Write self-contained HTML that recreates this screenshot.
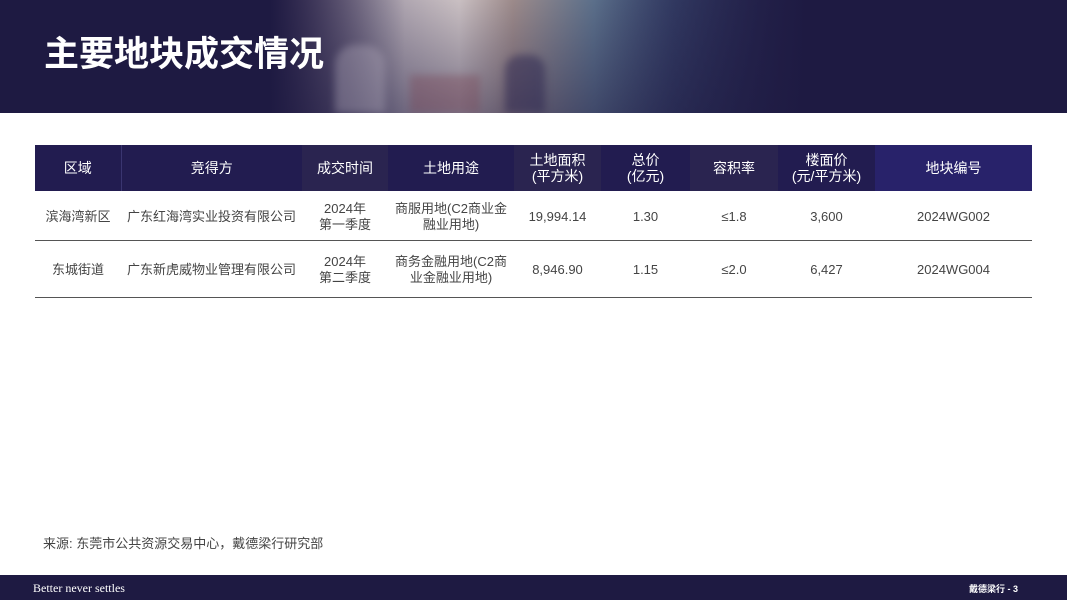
<!DOCTYPE html>
<html><head><meta charset="utf-8"><style>
*{margin:0;padding:0;box-sizing:border-box}
body{width:1067px;height:600px;position:relative;background:#fff;font-family:"Liberation Sans","Noto Sans CJK SC",sans-serif;overflow:hidden}
.hdr{position:absolute;left:0;top:0;width:1067px;height:113px;background:#1e1a42;overflow:hidden}
.photo{position:absolute;left:270px;top:0;width:540px;height:113px;
background:linear-gradient(90deg,rgba(30,26,66,1) 0%,rgba(30,26,66,0) 25%,rgba(30,26,66,0) 60%,rgba(30,26,66,1) 100%),
linear-gradient(180deg,rgba(30,26,66,0) 0%,rgba(30,26,66,.45) 100%),
linear-gradient(90deg,#6d5b78 0%,#a39aa8 20%,#c9bfc2 35%,#9c8a8a 45%,#5b6f8a 60%,#3c4a72 75%,#2a2a55 100%);}
.p1{position:absolute;left:335px;top:45px;width:50px;height:68px;background:#b8b0c0;opacity:.35;border-radius:20px 20px 0 0;filter:blur(4px)}
.p2{position:absolute;left:505px;top:55px;width:40px;height:58px;background:#2a2550;opacity:.5;border-radius:15px 15px 0 0;filter:blur(4px)}
.p3{position:absolute;left:410px;top:75px;width:70px;height:38px;background:#7a4050;opacity:.35;filter:blur(4px)}
h1{position:absolute;left:44px;top:33px;color:#fff;font-size:35px;font-weight:bold;letter-spacing:0px;line-height:44px}
table{position:absolute;left:35px;top:145px;width:997px;border-collapse:collapse;font-size:13px;color:#444}
th{background:#221c50;color:#fff;font-weight:normal;height:46px;line-height:16px;font-size:14px}
td{text-align:center;line-height:16px;font-size:13px;color:#444;padding-top:3px}
tr.r1 td{height:49px;border-bottom:1px solid #555}
tr.r2 td{height:57px;border-bottom:1px solid #555}
.src{position:absolute;left:43px;top:533px;font-size:13px;color:#444}
.ftr{position:absolute;left:0;top:575px;width:1067px;height:25px;background:#1e1a42;color:#fff}
.ftr .l{position:absolute;left:33px;top:6px;font-family:"Liberation Serif",serif;font-size:12px}
.ftr .r{position:absolute;right:49px;top:7px;font-size:9px;font-weight:bold}
</style></head><body>
<div class="hdr"><div class="photo"></div><div class="p1"></div><div class="p3"></div><div class="p2"></div><h1>主要地块成交情况</h1></div>
<table>
<tr><th style="width:86px;border-right:1px solid #3a3570">区域</th><th style="width:181px">竞得方</th><th style="width:86px;background:#2a2450">成交时间</th><th style="width:126px">土地用途</th><th style="width:87px;background:#2a2450">土地面积<br>(平方米)</th><th style="width:89px">总价<br>(亿元)</th><th style="width:88px;background:#2a2450">容积率</th><th style="width:97px">楼面价<br>(元/平方米)</th><th style="background:#28226a">地块编号</th></tr>
<tr class="r1"><td>滨海湾新区</td><td>广东红海湾实业投资有限公司</td><td>2024年<br>第一季度</td><td>商服用地(C2商业金<br>融业用地)</td><td>19,994.14</td><td>1.30</td><td>≤1.8</td><td>3,600</td><td>2024WG002</td></tr>
<tr class="r2"><td>东城街道</td><td>广东新虎威物业管理有限公司</td><td>2024年<br>第二季度</td><td>商务金融用地(C2商<br>业金融业用地)</td><td>8,946.90</td><td>1.15</td><td>≤2.0</td><td>6,427</td><td>2024WG004</td></tr>
</table>
<div class="src">来源: 东莞市公共资源交易中心，戴德梁行研究部</div>
<div class="ftr"><span class="l">Better never settles</span><span class="r">戴德梁行 - 3</span></div>
</body></html>
